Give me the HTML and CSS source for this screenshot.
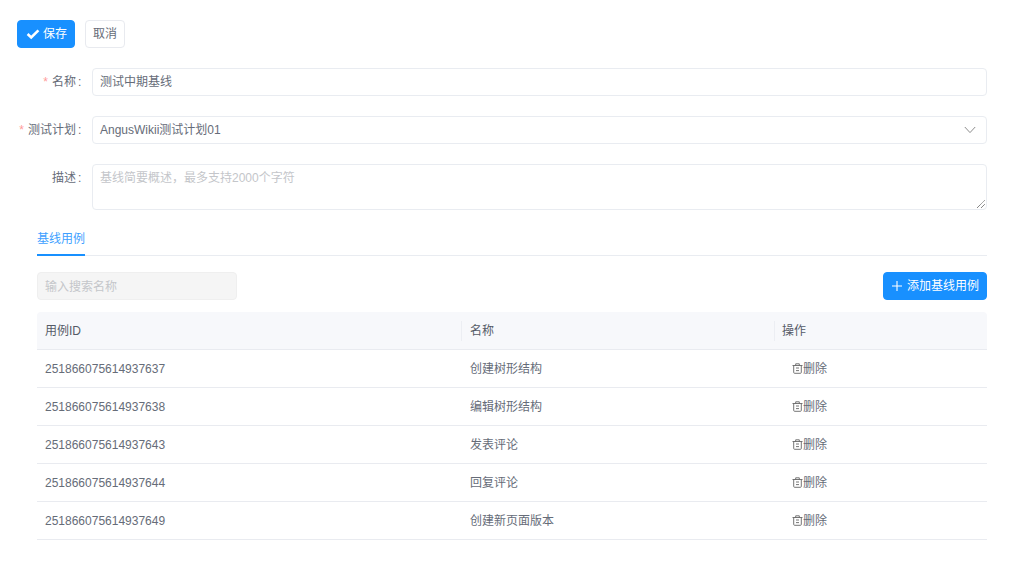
FILE: index.html
```html
<!DOCTYPE html>
<html lang="zh">
<head>
<meta charset="utf-8">
<title>基线</title>
<link rel="stylesheet" href="styles.css">
</head>
<body>
<main class="page">
  <div class="actions">
    <button class="btn btn-primary btn-save">
      <svg class="icon-check" viewBox="0 0 14 14" width="14" height="14"><path d="M1.6 7 L5.2 10.4 L12.4 3.4" fill="none" stroke="#fff" stroke-width="2.6"/></svg>
      <span>保存</span>
    </button>
    <button class="btn btn-default">取消</button>
  </div>
  <form class="form">
    <div class="form-row">
      <label class="form-label"><i class="req">*</i>名称<span class="colon">:</span></label>
      <div class="field">测试中期基线</div>
    </div>
    <div class="form-row">
      <label class="form-label"><i class="req">*</i>测试计划<span class="colon">:</span></label>
      <div class="field field-select">
        <span>AngusWikii测试计划01</span>
        <svg class="icon-chevron" viewBox="0 0 12 8" width="12" height="8"><path d="M0.8 1 L6 6.6 L11.2 1" fill="none" stroke="#8c8c8c" stroke-width="1"/></svg>
      </div>
    </div>
    <div class="form-row">
      <label class="form-label">描述<span class="colon">:</span></label>
      <div class="field field-area">
        <span class="placeholder">基线简要概述，最多支持2000个字符</span>
        <svg class="icon-resize" viewBox="0 0 8 8" width="8" height="8"><path d="M0 8 L8 0 M4 8 L8 4" fill="none" stroke="#555" stroke-width="1" stroke-dasharray="1 0.6"/></svg>
      </div>
    </div>
  </form>
  <section class="cases">
    <div class="tabs"><div class="tab">基线用例</div></div>
    <div class="toolbar">
      <div class="search">输入搜索名称</div>
      <button class="btn btn-primary btn-add">
        <svg class="icon-plus" viewBox="0 0 10 10" width="10" height="10"><path d="M5 0 V10 M0 5 H10" stroke="#fff" stroke-width="1.1" fill="none"/></svg>
        <span>添加基线用例</span>
      </button>
    </div>
    <div class="table">
      <div class="thead">
        <div class="cell cell-id">用例ID</div>
        <div class="cell cell-name"><b class="sep"></b>名称</div>
        <div class="cell cell-op"><b class="sep"></b>操作</div>
      </div>
      <div class="row"><div class="cell cell-id">251866075614937637</div><div class="cell cell-name">创建树形结构</div><div class="cell cell-op"><span class="del"><svg class="icon-trash" viewBox="0 0 11 11" width="11" height="11"><path d="M0.5 2.5 H10.5 M3.7 2.5 V0.8 H7.3 V2.5 M1.7 2.5 V9.4 Q1.7 10.3 2.6 10.3 H8.4 Q9.3 10.3 9.3 9.4 V2.5 M4 5 H7 M4 7.6 H7" fill="none" stroke="#666" stroke-width="0.9"/></svg>删除</span></div></div>
      <div class="row"><div class="cell cell-id">251866075614937638</div><div class="cell cell-name">编辑树形结构</div><div class="cell cell-op"><span class="del"><svg class="icon-trash" viewBox="0 0 11 11" width="11" height="11"><path d="M0.5 2.5 H10.5 M3.7 2.5 V0.8 H7.3 V2.5 M1.7 2.5 V9.4 Q1.7 10.3 2.6 10.3 H8.4 Q9.3 10.3 9.3 9.4 V2.5 M4 5 H7 M4 7.6 H7" fill="none" stroke="#666" stroke-width="0.9"/></svg>删除</span></div></div>
      <div class="row"><div class="cell cell-id">251866075614937643</div><div class="cell cell-name">发表评论</div><div class="cell cell-op"><span class="del"><svg class="icon-trash" viewBox="0 0 11 11" width="11" height="11"><path d="M0.5 2.5 H10.5 M3.7 2.5 V0.8 H7.3 V2.5 M1.7 2.5 V9.4 Q1.7 10.3 2.6 10.3 H8.4 Q9.3 10.3 9.3 9.4 V2.5 M4 5 H7 M4 7.6 H7" fill="none" stroke="#666" stroke-width="0.9"/></svg>删除</span></div></div>
      <div class="row"><div class="cell cell-id">251866075614937644</div><div class="cell cell-name">回复评论</div><div class="cell cell-op"><span class="del"><svg class="icon-trash" viewBox="0 0 11 11" width="11" height="11"><path d="M0.5 2.5 H10.5 M3.7 2.5 V0.8 H7.3 V2.5 M1.7 2.5 V9.4 Q1.7 10.3 2.6 10.3 H8.4 Q9.3 10.3 9.3 9.4 V2.5 M4 5 H7 M4 7.6 H7" fill="none" stroke="#666" stroke-width="0.9"/></svg>删除</span></div></div>
      <div class="row"><div class="cell cell-id">251866075614937649</div><div class="cell cell-name">创建新页面版本</div><div class="cell cell-op"><span class="del"><svg class="icon-trash" viewBox="0 0 11 11" width="11" height="11"><path d="M0.5 2.5 H10.5 M3.7 2.5 V0.8 H7.3 V2.5 M1.7 2.5 V9.4 Q1.7 10.3 2.6 10.3 H8.4 Q9.3 10.3 9.3 9.4 V2.5 M4 5 H7 M4 7.6 H7" fill="none" stroke="#666" stroke-width="0.9"/></svg>删除</span></div></div>
    </div>
  </section>
</main>
</body>
</html>
```
FILE: styles.css
```css
* { box-sizing: border-box; }
html, body { margin: 0; height: 100%; background: #fff; }
body {
  font-family: "Liberation Sans", "Noto Sans CJK SC", sans-serif;
  font-size: 12px;
  line-height: 20px;
  color: #666c78;
  overflow: hidden;
}
.page { padding: 20px 26px 0 17px; }
.actions { display: flex; gap: 10px; }
.btn {
  height: 28px;
  border-radius: 4px;
  font: inherit;
  display: inline-flex;
  align-items: center;
  padding: 0;
  cursor: pointer;
}
.btn-primary { background: #1890ff; border: 1px solid #1890ff; color: #fff; }
.btn-default { background: #fff; border: 1px solid #e8eaef; color: #666c78; width: 40px; justify-content: center; }
.btn-save { width: 58px; padding-left: 8px; gap: 3px; }
.form { margin-top: 20px; display: flex; flex-direction: column; gap: 20px; }
.form-row { display: flex; }
.form-label {
  width: 75px;
  flex: none;
  height: 28px;
  display: flex;
  align-items: center;
  justify-content: flex-end;
  padding-right: 9px;
  color: #666c78;
  white-space: nowrap;
}
.req { font-style: normal; color: #ff9c9a; margin-right: 4px; font-size: 12px; }
.colon { margin-left: 2px; width: 5px; }
.field {
  flex: 1;
  height: 28px;
  border: 1px solid #e9ecf1;
  border-radius: 4px;
  padding: 3px 7px;
  color: #666c78;
  background: #fff;
}
.field-select { display: flex; align-items: center; justify-content: space-between; padding-right: 10px; }
.field-area { height: 46px; position: relative; }
.placeholder { color: #c4c6ca; }
.icon-resize { position: absolute; right: 1px; bottom: 1px; }
.cases { margin: 9px 0 0 20px; }
.tabs { border-bottom: 1px solid #e9ecf1; height: 37px; display: flex; }
.tab {
  color: #3d9fff;
  height: 37px;
  padding-top: 10px;
  border-bottom: 2px solid #1890ff;
  width: 48px;
  white-space: nowrap;
}
.toolbar { display: flex; justify-content: space-between; margin-top: 16px; }
.search {
  width: 200px;
  height: 28px;
  background: #f5f5f5;
  border: 1px solid #efefef;
  border-radius: 4px;
  padding: 4px 7px 2px;
  color: #c4c6ca;
}
.btn-add { width: 104px; padding-left: 8px; gap: 5px; }
.table { margin-top: 12px; }
.thead, .row { display: grid; grid-template-columns: 425px 312px 213px; border-bottom: 1px solid #e9ebf0; height: 38px; align-items: center; }
.thead { background: #f7f8fb; border-radius: 4px 4px 0 0; color: #555b67; }
.cell { padding-left: 8px; position: relative; white-space: nowrap; }
.cell-name .sep { left: -1px; }
.sep { position: absolute; left: 0; top: 0; bottom: 0; margin: auto; width: 1px; height: 20px; background: #eceef3; }
.del { display: flex; align-items: center; margin-left: 10px; height: 22px; padding-top: 1px; }
.icon-trash { margin-top: -2px; }
```
